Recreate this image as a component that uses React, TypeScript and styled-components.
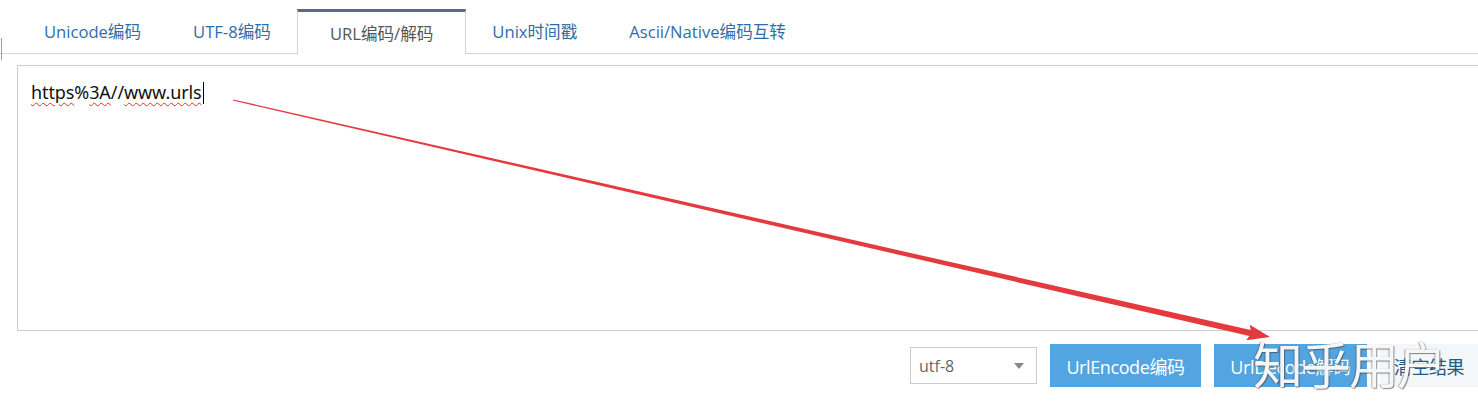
import styled, { createGlobalStyle } from "styled-components";

const GlobalStyle = createGlobalStyle`
  html, body {
    margin: 0;
    padding: 0;
    background: #fff;
    font-family: "Open Sans", "Noto Sans CJK SC", sans-serif;
  }
`;

const Page = styled.div`
  position: relative;
  width: 1478px;
  height: 410px;
  overflow: hidden;
`;

const TabBar = styled.ul`
  position: relative;
  display: flex;
  margin: 0;
  padding: 9px 0 0 18px;
  list-style: none;
  height: 44px;
  border-bottom: 1px solid #d4d4d4;

  &::before {
    content: "";
    position: absolute;
    left: 1px;
    top: 38px;
    width: 1px;
    height: 22px;
    background: #8ea0b8;
  }
`;

const Tab = styled.li<{ active?: boolean }>`
  display: flex;
  align-items: center;
  height: ${p => (p.active ? "42px" : "44px")};
  padding: 0 ${p => (p.active ? "32px" : "26px")};
  margin-bottom: ${p => (p.active ? "-1px" : "0")};
  font-size: 16.6px;
  color: ${p => (p.active ? "#555" : "#2f6ea5")};
  background: #fff;
  border: ${p => (p.active ? "1px solid #d4d4d4" : "none")};
  border-top: ${p => (p.active ? "3px solid #5b6b7a" : "none")};
  border-bottom: ${p => (p.active ? "1px solid #fff" : "none")};
  cursor: pointer;
  white-space: nowrap;
`;

const Body = styled.div`
  padding: 11px 0 0 17px;
`;

const Editor = styled.div`
  box-sizing: border-box;
  height: 266px;
  margin-right: -2px;
  padding: 14px 13px;
  border: 1px solid #cfcfcf;
  font-family: "Noto Sans", "Noto Sans CJK SC", sans-serif;
  font-size: 18px;
  color: #111;
  letter-spacing: -0.1px;
`;

const Misspelled = styled.span`
  text-decoration: underline wavy #d9342b;
  text-decoration-thickness: 1px;
  text-underline-offset: 3px;
`;

const Caret = styled.span`
  display: inline-block;
  width: 1px;
  height: 22px;
  margin-left: 1px;
  vertical-align: -5px;
  background: #000;
`;

const Actions = styled.div`
  display: flex;
  justify-content: flex-end;
  align-items: center;
  gap: 13px;
  margin-top: 13px;
`;

const Select = styled.div`
  box-sizing: border-box;
  display: flex;
  align-items: center;
  justify-content: space-between;
  width: 127px;
  height: 37px;
  padding: 0 12px 0 8px;
  border: 1px solid #ccc;
  font-size: 16px;
  color: #666;
`;

const Caretdown = styled.span`
  width: 0;
  height: 0;
  border-left: 5px solid transparent;
  border-right: 5px solid transparent;
  border-top: 6px solid #888;
`;

const Button = styled.button<{ w: number; plain?: boolean }>`
  width: ${p => p.w}px;
  height: 43px;
  padding: 0;
  border: none;
  font-family: "Open Sans", "Noto Sans CJK SC", sans-serif;
  font-size: 18px;
  letter-spacing: -0.4px;
  color: ${p => (p.plain ? "#245a86" : "#fff")};
  background: ${p => (p.plain ? "#f3f7fa" : "#52a5e0")};
  cursor: pointer;
`;

const Watermark = styled.div`
  position: absolute;
  left: 1253px;
  top: 326px;
  font-family: "Noto Sans CJK SC", sans-serif;
  font-size: 50px;
  font-weight: 400;
  letter-spacing: -2px;
  color: rgba(255, 255, 255, 0.94);
  text-shadow: 1px 1px 1px rgba(60, 60, 60, 0.6), -1px 0 1px rgba(60, 60, 60, 0.45);
  pointer-events: none;
`;

const Overlay = styled.svg`
  position: absolute;
  left: 0;
  top: 0;
  pointer-events: none;
`;

function Arrow() {
  return (
    <Overlay width="1478" height="410" viewBox="0 0 1478 410">
      <polygon
        fill="#e53a3d"
        points="232.9,100.6 233.1,99.4 1250.7,330.1 1249.8,324.7 1270,337 1246.2,340.3 1249.3,335.9"
      />
    </Overlay>
  );
}

const tabs = ["Unicode编码", "UTF-8编码", "URL编码/解码", "Unix时间戳", "Ascii/Native编码互转"];

export default function App() {
  return (
    <Page>
      <GlobalStyle />
      <TabBar>
        {tabs.map(t => (
          <Tab key={t} active={t === "URL编码/解码"}>{t}</Tab>
        ))}
      </TabBar>
      <Body>
        <Editor>
          <Misspelled>https</Misspelled>%<Misspelled>3A</Misspelled>//<Misspelled>www.urls</Misspelled>
          <Caret />
        </Editor>
        <Actions>
          <Select>
            utf-8
            <Caretdown />
          </Select>
          <Button w={151}>UrlEncode编码</Button>
          <Button w={153}>UrlDecode解码</Button>
          <Button w={98} plain>清空结果</Button>
        </Actions>
      </Body>
      <Arrow />
      <Watermark>知乎用户</Watermark>
    </Page>
  );
}
